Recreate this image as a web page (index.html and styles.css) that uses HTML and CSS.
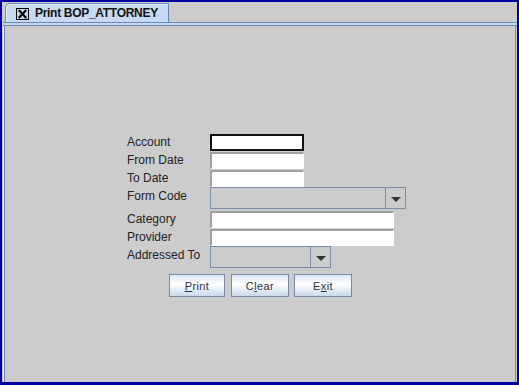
FILE: index.html
```html
<!DOCTYPE html>
<html>
<head>
<meta charset="utf-8">
<link rel="stylesheet" href="styles.css">
</head>
<body>
<div class="window">
  <div class="tabbar">
    <div class="tab">
      <span class="tab-close">
        <svg width="13" height="12" viewBox="0 0 13 12"><rect x="0.5" y="0.5" width="12" height="11" fill="none" stroke="#000" stroke-width="1"/><path d="M3.5 2.8 L9.5 9.2 M9.5 2.8 L3.5 9.2" stroke="#000" stroke-width="2.2" stroke-linecap="square"/></svg>
      </span>
      <span class="tab-title">Print BOP_ATTORNEY</span>
    </div>
  </div>
  <div class="strip"></div>
  <div class="content">
    <div class="form">
      <label class="lbl">Account</label>
      <div class="field focused"></div>
      <label class="lbl">From Date</label>
      <div class="field"></div>
      <label class="lbl">To Date</label>
      <div class="field"></div>
      <label class="lbl lbl-combo">Form Code</label>
      <div class="combo wide"><div class="combo-value"></div><div class="combo-arrow"><span class="tri"></span></div></div>
      <label class="lbl">Category</label>
      <div class="field long"></div>
      <label class="lbl">Provider</label>
      <div class="field long"></div>
      <label class="lbl lbl-combo">Addressed To</label>
      <div class="combo narrow"><div class="combo-value"></div><div class="combo-arrow"><span class="tri"></span></div></div>
      <div class="buttons">
        <button class="btn btn-print"><u>P</u>rint</button>
        <button class="btn btn-clear">C<u>l</u>ear</button>
        <button class="btn btn-exit">E<u>x</u>it</button>
      </div>
    </div>
  </div>
</div>
</body>
</html>
```
FILE: styles.css
```css
html, body {
  margin: 0;
  padding: 0;
}
body {
  background: #0000a0;
  width: 519px;
  height: 385px;
  overflow: hidden;
  font-family: "Liberation Sans", Arial, sans-serif;
  font-size: 12px;
  color: #222;
}
.window {
  margin: 2px 2px 0 2px;
  height: 380px;
  background: #cccccc;
  display: flex;
  flex-direction: column;
}
.tabbar {
  height: 20px;
  display: flex;
  align-items: flex-end;
}
.tab {
  margin-left: 3px;
  width: 164px;
  height: 19px;
  box-sizing: border-box;
  border: 1px solid #6a86b8;
  border-bottom: none;
  border-top-left-radius: 5px;
  background: #c8daf2;
  display: flex;
  align-items: center;
  padding-left: 10px;
  box-shadow: inset 1px 1px 0 #e8f0fa;
}
.tab-close {
  display: flex;
  width: 13px;
  height: 12px;
  margin-right: 6px;
  margin-top: 1px;
}
.tab-title {
  font-weight: bold;
  font-size: 12px;
  color: #111;
  letter-spacing: -0.3px;
}
.strip {
  height: 2px;
  margin-left: 1px;
  border-top: 1px solid #6a86b8;
  border-bottom: 1px solid #6a86b8;
  background: #c8daf2;
}
.content {
  flex: 1;
  margin-left: 1px;
  margin-right: 1px;
  border-left: 1px solid #eeeeee;
  border-right: 1px solid #8a8a8a;
  box-shadow: inset 1px 0 0 #6a86b8;
  padding-top: 108px;
  padding-left: 123px;
}
.form {
  display: grid;
  grid-template-columns: 83px auto;
  grid-template-rows: 18px 18px 17px 24px 18px 17px 28px 23px;
  justify-items: start;
  align-items: start;
}
.lbl {
  grid-column: 1;
  height: 17px;
  line-height: 17px;
  white-space: nowrap;
  color: #222;
}
.lbl.lbl-combo {
  height: 18px;
  line-height: 18px;
}
.field {
  grid-column: 2;
  width: 94px;
  height: 17px;
  box-sizing: border-box;
  background: #fff;
  border-top: 2px solid #a0a0a0;
  border-left: 2px solid #a0a0a0;
  border-right: 1px solid #fff;
  border-bottom: 1px solid #fff;
}
.field.focused {
  border: 2px solid #111;
}
.field.long {
  width: 184px;
}
.combo {
  grid-column: 2;
  height: 22px;
  box-sizing: border-box;
  border: 1px solid #7a8aab;
  display: flex;
  background: #cccccc;
}
.combo.wide { width: 196px; }
.combo.narrow { width: 121px; }
.combo-value { flex: 1; }
.combo-arrow {
  width: 19px;
  border-left: 1px solid #7a8aab;
  display: flex;
  align-items: center;
  justify-content: center;
}
.tri {
  width: 0;
  height: 0;
  border-left: 5px solid transparent;
  border-right: 5px solid transparent;
  border-top: 5px solid #333;
  margin-top: 2px;
}
.buttons {
  grid-column: 1 / span 2;
  padding-left: 42px;
  display: flex;
  gap: 5px;
}
.btn {
  height: 23px;
  box-sizing: border-box;
  border: 1px solid #7a8aab;
  background: linear-gradient(#dde8f5 0%, #f7fafd 35%, #ffffff 45%, #dbe6f3 80%, #c9d9ec 100%);
  font-family: "Liberation Sans", Arial, sans-serif;
  font-size: 11px;
  color: #333;
  padding: 0;
  letter-spacing: 0.4px;
}
.btn-print { width: 56px; }
.btn-clear { width: 58px; margin-left: 1px; }
.btn-exit { width: 58px; }
.btn u { text-decoration: underline; }
```
